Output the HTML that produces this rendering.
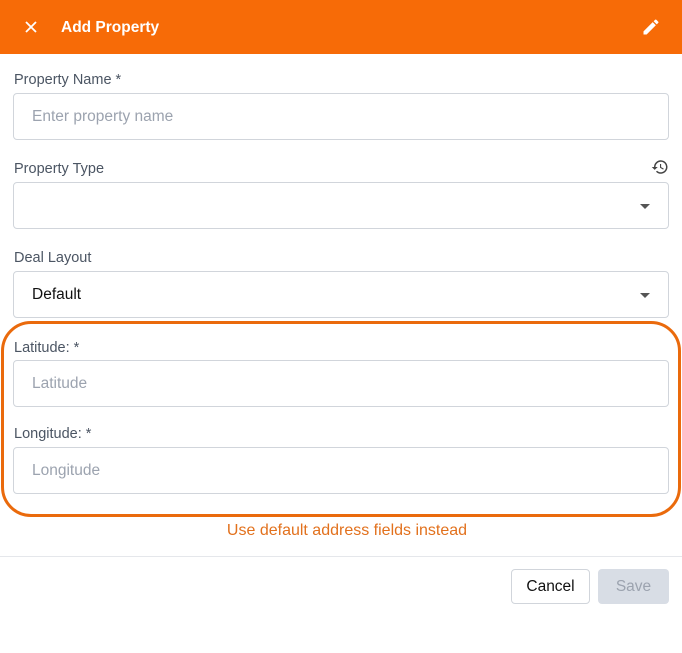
<!DOCTYPE html><html><head><style>
*{box-sizing:border-box;margin:0;padding:0}
body{width:682px;height:653px;background:#fff;font-family:"Liberation Sans",sans-serif;position:relative;overflow:hidden}
.hdr{position:absolute;left:0;top:0;width:682px;height:54px;background:#f76b07;color:#fff}
.lbl{position:absolute;left:14px;font-size:14.5px;color:#4b5563}
.inp{position:absolute;left:13px;width:656px;border:1px solid #d1d5db;border-radius:4px;font-size:15.5px;color:#9ca3af;padding-left:18px;display:flex;align-items:center}
.car{position:absolute;right:18px;top:50%;margin-top:-2px;border-left:5px solid transparent;border-right:5px solid transparent;border-top:5px solid #555}
</style></head><body>
<div class="hdr">
<svg style="position:absolute;left:25px;top:21px" width="12" height="12" viewBox="0 0 12 12"><path d="M1 1L11 11M11 1L1 11" stroke="#fff" stroke-width="1.8"/></svg>
<div style="position:absolute;left:61px;top:19px;font-size:15.5px;font-weight:bold">Add Property</div>
<svg style="position:absolute;left:641px;top:17px" width="20" height="20" viewBox="0 0 24 24"><path fill="#fff" d="M3 17.25V21h3.75L17.81 9.94l-3.75-3.75L3 17.25zM20.71 7.04a1 1 0 0 0 0-1.41l-2.34-2.34a1 1 0 0 0-1.41 0l-1.83 1.83 3.75 3.75 1.83-1.83z"/></svg>
</div>
<div class="lbl" style="top:72px">Property Name *</div>
<div class="inp" style="top:93px;height:47px">Enter property name</div>
<div class="lbl" style="top:161px">Property Type</div>
<svg style="position:absolute;left:651px;top:158px" width="18" height="18" viewBox="0 0 24 24"><path fill="#444" d="M13 3a9 9 0 0 0-9 9H1l3.9 3.9L9 12H6a7 7 0 1 1 2.05 4.95l-1.42 1.42A9 9 0 1 0 13 3zm-1 5v5l4.25 2.52.77-1.28-3.52-2.09V8H12z"/></svg>
<div class="inp" style="top:182px;height:47px"><span class="car"></span></div>
<div class="lbl" style="top:250px">Deal Layout</div>
<div class="inp" style="top:271px;height:47px;color:#111">Default<span class="car"></span></div>
<div style="position:absolute;left:1px;top:321px;width:680px;height:196px;border:3px solid #ea6a0c;border-radius:30px"></div>
<div class="lbl" style="top:340px">Latitude: *</div>
<div class="inp" style="top:360px;height:47px">Latitude</div>
<div class="lbl" style="top:426px">Longitude: *</div>
<div class="inp" style="top:447px;height:47px">Longitude</div>
<div style="position:absolute;left:0;width:694px;top:522px;text-align:center;font-size:16px;color:#e2711d">Use default address fields instead</div>
<div style="position:absolute;left:0;top:556px;width:682px;border-top:1px solid #e5e7eb"></div>
<div style="position:absolute;left:511px;top:569px;width:79px;height:35px;border:1px solid #d1d5db;border-radius:4px;font-size:15.5px;color:#111;display:flex;align-items:center;justify-content:center">Cancel</div>
<div style="position:absolute;left:598px;top:569px;width:71px;height:35px;background:#d8dde5;border-radius:4px;font-size:15.5px;color:#9ca3af;display:flex;align-items:center;justify-content:center">Save</div>
</body></html>
